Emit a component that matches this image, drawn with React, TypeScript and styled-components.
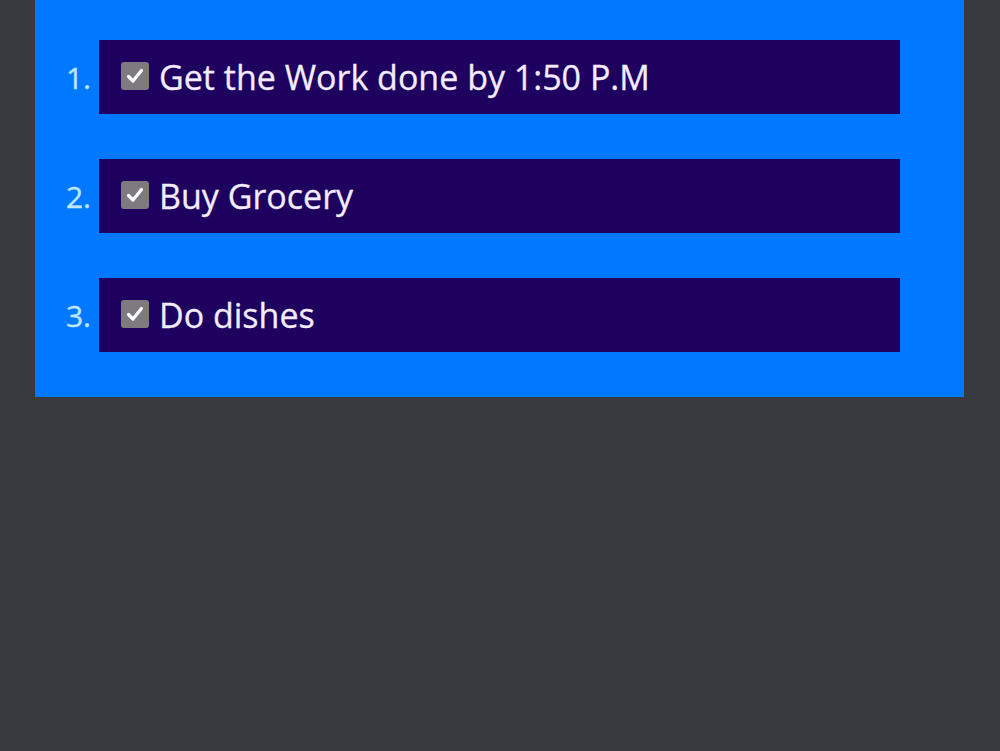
import React from "react";
import styled, { createGlobalStyle } from "styled-components";

const Global = createGlobalStyle`
  html, body { margin: 0; padding: 0; background: #373a3f; }
  body { font-family: "Open Sans", "Noto Sans", sans-serif; }
`;

const Page = styled.div`
  width: 1000px;
  height: 751px;
  background: #373a3f;
  padding: 0 36px 0 35px;
  box-sizing: border-box;
`;

const Panel = styled.div`
  background: #0078ff;
  padding: 40px 64px 45px 0;
  display: flex;
  flex-direction: column;
  gap: 45px;
`;

const Row = styled.div`
  display: flex;
  align-items: center;
`;

const Num = styled.span`
  width: 56px;
  text-align: right;
  padding-right: 8px;
  color: #bfe6ff;
  font-size: 30px;
  -webkit-text-stroke: 0.4px #bfe6ff;
  flex: none;
`;

const Item = styled.label`
  flex: 1;
  height: 74px;
  background: #1e005f;
  display: flex;
  align-items: center;
  padding-left: 22px;
  gap: 10px;
  color: #f3ecff;
  font-size: 34px;
  -webkit-text-stroke: 0.3px #f3ecff;
`;

const Box = styled.span`
  width: 28px;
  height: 28px;
  border-radius: 3px;
  background: #7d7b80;
  display: flex;
  align-items: center;
  justify-content: center;
  flex: none;
  margin-top: -2px;
`;

const items = ["Get the Work done by 1:50 P.M", "Buy Grocery", "Do dishes"];

export default function App() {
  return (
    <>
      <Global />
      <Page>
        <Panel>
          {items.map((t, i) => (
            <Row key={t}>
              <Num>{i + 1}.</Num>
              <Item>
                <Box>
                  <svg width="20" height="20" viewBox="0 0 20 20">
                    <path d="M3.5 10.5 L8 15 L16.5 4.5" fill="none" stroke="#fff" strokeWidth="3.2" strokeLinecap="round" strokeLinejoin="round" />
                  </svg>
                </Box>
                {t}
              </Item>
            </Row>
          ))}
        </Panel>
      </Page>
    </>
  );
}
